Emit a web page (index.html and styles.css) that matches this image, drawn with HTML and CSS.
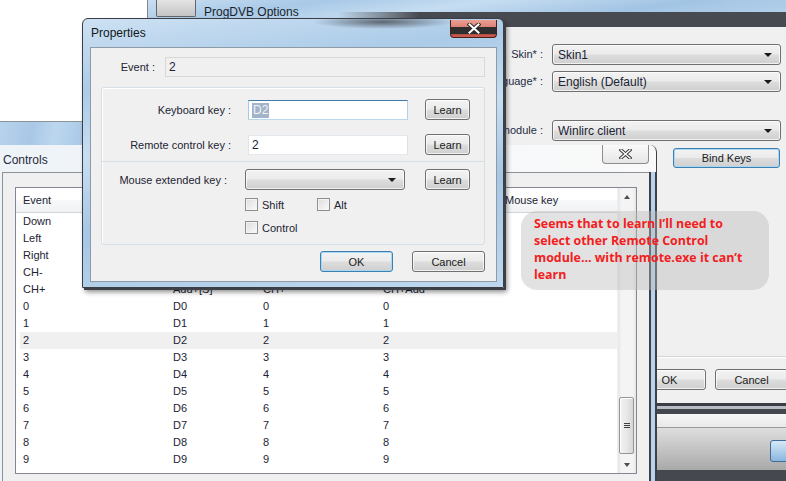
FILE: index.html
```html
<!DOCTYPE html>
<html>
<head>
<meta charset="utf-8">
<link rel="stylesheet" href="styles.css">
</head>
<body>
<div class="glass-strip"></div>

<section class="win pd">
  <header class="pd-title glass">
    <div class="pd-tab"></div>
    <span class="pd-title-text">ProgDVB Options</span>
    <div class="pd-dark"></div>
  </header>
  <div class="pd-body">
    <div class="pd-frame glass"></div>
    <div class="pd-client">
      <div class="pd-form">
        <span class="pd-lbl">Skin* :</span><div class="combo"><span>Skin1</span><i class="arrow"></i></div>
        <span class="pd-lbl">Language* :</span><div class="combo"><span>English (Default)</span><i class="arrow"></i></div>
        <span class="pd-lbl far">Remote control module :</span><div class="combo far"><span>Winlirc client</span><i class="arrow"></i></div>
      </div>
      <button class="btn def bind">Bind Keys</button>
      <div class="pd-sep"></div>
      <div class="pd-btns"><button class="btn">OK</button><button class="btn">Cancel</button></div>
    </div>
  </div>
  <div class="pd-bottom">
    <div class="pb-dark"></div>
    <div class="pb-mid"></div>
    <div class="pb-dark2"></div>
    <div class="pb-light"></div>
    <div class="pb-gray"><div class="pb-btn"></div></div>
    <div class="pb-dark3"></div>
  </div>
</section>

<section class="win ctl">
  <header class="ctl-title">
    <span>Controls</span>
    <div class="close-in">
      <svg width="13" height="10" viewBox="0 0 13 10"><path d="M2 1 L11 9 M11 1 L2 9" stroke="#3c3c3c" stroke-width="3.4" stroke-linecap="square"/><path d="M2 1 L11 9 M11 1 L2 9" stroke="#ffffff" stroke-width="1.4" stroke-linecap="square"/></svg>
    </div>
  </header>
  <div class="ctl-body">
    <div class="ctl-frame-l"></div>
    <div class="ctl-client">
      <div class="lv">
        <div class="lv-main">
          <div class="lv-head">
            <span class="c1">Event</span><span class="c2"></span><span class="c3"></span><span class="c4"></span><span class="c5">Mouse key</span>
          </div>
          <div class="lv-row"><span class="c1">Down</span></div>
          <div class="lv-row"><span class="c1">Left</span></div>
          <div class="lv-row"><span class="c1">Right</span></div>
          <div class="lv-row"><span class="c1">CH-</span></div>
          <div class="lv-row"><span class="c1">CH+</span><span class="c2">Add+[S]</span><span class="c3">CH+</span><span class="c4">CH+Add</span></div>
          <div class="lv-row"><span class="c1">0</span><span class="c2">D0</span><span class="c3">0</span><span class="c4">0</span></div>
          <div class="lv-row"><span class="c1">1</span><span class="c2">D1</span><span class="c3">1</span><span class="c4">1</span></div>
          <div class="lv-row sel"><span class="c1">2</span><span class="c2">D2</span><span class="c3">2</span><span class="c4">2</span></div>
          <div class="lv-row"><span class="c1">3</span><span class="c2">D3</span><span class="c3">3</span><span class="c4">3</span></div>
          <div class="lv-row"><span class="c1">4</span><span class="c2">D4</span><span class="c3">4</span><span class="c4">4</span></div>
          <div class="lv-row"><span class="c1">5</span><span class="c2">D5</span><span class="c3">5</span><span class="c4">5</span></div>
          <div class="lv-row"><span class="c1">6</span><span class="c2">D6</span><span class="c3">6</span><span class="c4">6</span></div>
          <div class="lv-row"><span class="c1">7</span><span class="c2">D7</span><span class="c3">7</span><span class="c4">7</span></div>
          <div class="lv-row"><span class="c1">8</span><span class="c2">D8</span><span class="c3">8</span><span class="c4">8</span></div>
          <div class="lv-row"><span class="c1">9</span><span class="c2">D9</span><span class="c3">9</span><span class="c4">9</span></div>
        </div>
        <div class="sb">
          <div class="sb-up"><i class="tri-up"></i></div>
          <div class="sb-thumb"><span></span><span></span><span></span></div>
          <div class="sb-down"><i class="tri-down"></i></div>
        </div>
      </div>
    </div>
    <div class="ctl-frame-r"></div>
  </div>
</section>

<section class="win props">
  <header class="pr-title">
    <span>Properties</span>
    <div class="close-red">
      <svg width="14" height="11" viewBox="0 0 14 11"><path d="M2.5 1.5 L11.5 9.5 M11.5 1.5 L2.5 9.5" stroke="#2a2a2a" stroke-width="4" stroke-linecap="square"/><path d="M2.5 1.5 L11.5 9.5 M11.5 1.5 L2.5 9.5" stroke="#ffffff" stroke-width="2" stroke-linecap="square"/></svg>
    </div>
  </header>
  <div class="pr-body">
    <div class="pr-client">
      <div class="ev-row"><span class="ev-label">Event :</span><div class="field disabled">2</div></div>
      <div class="grp">
        <div class="s1">
          <span class="lbl">Keyboard key :</span><div class="field focus"><span class="hl">D2</span></div><button class="btn learn">Learn</button>
          <span class="lbl">Remote control key :</span><div class="field">2</div><button class="btn learn">Learn</button>
        </div>
        <div class="s2">
          <span class="lbl">Mouse extended key :</span><div class="combo small"><span></span><i class="arrow"></i></div><button class="btn learn">Learn</button>
          <div class="checks">
            <label class="chk"><i class="box"></i>Shift</label>
            <label class="chk"><i class="box"></i>Alt</label>
            <label class="chk"><i class="box"></i>Control</label>
          </div>
        </div>
      </div>
      <div class="pr-btns"><button class="btn def">OK</button><button class="btn">Cancel</button></div>
    </div>
  </div>
</section>

<div class="bubble">Seems that to learn I’ll need to select other Remote Control module... with remote.exe it can’t learn</div>
</body>
</html>
```

FILE: styles.css
```css
* { box-sizing: border-box; margin: 0; padding: 0; }
html, body { width: 786px; height: 481px; overflow: hidden; }
body {
  position: relative;
  background: #ffffff;
  font-family: "Liberation Sans", Arial, sans-serif;
  font-size: 11px;
  color: #1c2433;
}

.glass {
  background: linear-gradient(172deg, #c9def2 0%, #a8c9e7 22%, #c6ddf1 42%, #a2c4e4 66%, #bdd7ee 100%);
}

.win { position: absolute; }

/* strip of window frame behind, left */
.glass-strip {
  position: absolute;
  left: 0; top: 121px;
  width: 90px; height: 26px;
  border-top: 1px solid #8e9398;
  background: linear-gradient(100deg, #b8d3ec 0%, #a9c8e6 35%, #bcd6ee 60%, #a5c6e5 100%);
}

/* ---------- ProgDVB Options ---------- */
.pd { left: 147px; top: 0; width: 639px; height: 481px; display: flex; flex-direction: column; z-index: 1; }
.pd-title { position: relative; height: 27px; flex: none; border-left: 1px solid #7d8a96; }
.pd-tab {
  position: absolute; left: 8px; top: 0; width: 40px; height: 17px;
  background: linear-gradient(#e4e4e4, #c4c4c4);
  border: 1px solid #62666b; border-top: none; border-radius: 0 0 2px 2px;
}
.pd-title-text { position: absolute; left: 56px; top: 5px; font-size: 12px; color: #1a1f2b; line-height: 14px; }
.pd-dark {
  position: absolute; left: 190px; right: 0; top: 12px; height: 15px;
  background: linear-gradient(90deg, rgba(70,74,81,0) 0%, #474a51 18%, #474a51 100%);
}
.pd-body { display: flex; height: 376px; flex: none; }
.pd-frame { width: 8px; flex: none; border-left: 1px solid #7d8a96; }
.pd-client {
  flex: 1; min-width: 0; background: #f0f0f0;
  display: flex; flex-direction: column;
  border-left: 1px solid #c9c9c9;
}
.pd-form {
  margin-top: 17px;
  display: grid;
  grid-template-columns: 387px 229px;
  grid-template-rows: 21px 21px 43px;
  column-gap: 9px;
  row-gap: 6px;
}
.pd-lbl { text-align: right; line-height: 21px; color: #1e2c44; font-size: 11px; white-space: nowrap; }
.pd-form .combo { height: 21px; }
.pd-form .far { align-self: end; }
.bind { margin: 7px 0 0 517px; width: 107px; height: 20px; flex: none; }
.pd-sep { margin-top: 188px; height: 2px; flex: none; border-top: 1px solid #d5d5d5; border-bottom: 1px solid #ffffff; }
.pd-btns { margin: 11px 0 0 477px; display: flex; gap: 9px; }
.pd-btns .btn { width: 73px; height: 21px; flex: none; }

.pd-bottom { flex: 1; display: flex; flex-direction: column; }
.pb-dark { height: 3px; background: #3a3d43; }
.pb-mid { height: 3px; background: #b9bdc3; }
.pb-dark2 { height: 5px; background: #44474d; }
.pb-light { height: 14px; background: linear-gradient(#f7f7f7, #e9e9e9); border-bottom: 1px solid #9a9a9a; }
.pb-gray {
  height: 42px; position: relative;
  background: linear-gradient(#dedede, #a9a9a9);
  border-radius: 8px 0 0 0;
}
.pb-btn {
  position: absolute; left: 623px; top: 12px; width: 30px; height: 22px;
  border: 1px solid #3f6d98; border-radius: 3px;
  background: linear-gradient(#d7e8f7, #8ab7df);
}
.pb-dark3 { flex: 1; background: #45484f; }

/* ---------- common controls ---------- */
.btn {
  font-family: "Liberation Sans", Arial, sans-serif;
  font-size: 11px;
  color: #1a1a1a;
  border: 1px solid #707070;
  border-radius: 3px;
  background: linear-gradient(#f3f3f3 0%, #ebebeb 48%, #dddddd 52%, #cfcfcf 100%);
  box-shadow: inset 0 0 0 1px rgba(255,255,255,0.7);
  display: flex; align-items: center; justify-content: center;
}
.btn.def {
  border-color: #3c7fb1;
  box-shadow: inset 0 0 0 1px #a9d7f4;
}
.combo {
  position: relative;
  border: 1px solid #707070;
  border-radius: 3px;
  background: linear-gradient(#f2f2f2 0%, #ebebeb 48%, #dddddd 52%, #cfcfcf 100%);
  box-shadow: inset 0 0 0 1px rgba(255,255,255,0.7);
  display: flex; align-items: center;
  padding-left: 5px;
  color: #1a2334;
  font-size: 12px;
}
.arrow {
  position: absolute; right: 8px; top: 50%; margin-top: -2px;
  width: 0; height: 0;
  border-left: 4px solid transparent; border-right: 4px solid transparent;
  border-top: 4px solid #1b1b1b;
}
.field {
  height: 20px;
  background: #ffffff;
  border: 1px solid #abadb3;
  border-top-color: #e3e9ef;
  border-left-color: #e2e3ea;
  border-right-color: #dbdfe6;
  border-bottom-color: #e3e9ef;
  padding-left: 3px;
  line-height: 18px;
  font-size: 12px;
  color: #1a2334;
}
.field.focus { border-color: #3d7bad #b5cfe7 #b7d9ed #a4c9e3; border-top-color: #3d7bad; }
.field.disabled { background: #f0f0f0; border-color: #d8d8d8; }
.hl { background: #a3b3c9; color: #eef2f7; padding: 0 1px; display: inline-block; line-height: 15px; margin-top: 1px; }

/* ---------- Controls ---------- */
.ctl { left: -5px; top: 145px; width: 662px; height: 345px; display: flex; flex-direction: column; z-index: 2; }
.ctl-title {
  position: relative; height: 27px; flex: none;
  background: linear-gradient(90deg, #eef3f8 0%, #f6f8fa 60%, #f9f9f9 100%);
  border-top-right-radius: 7px;
  border-right: 1px solid #3c3f45;
  padding-left: 8px;
  font-size: 12px; line-height: 30px; color: #1f2a3b;
}
.close-in {
  position: absolute; right: 7px; top: 0; width: 47px; height: 19px;
  border: 1px solid #8d8d8d; border-top: none;
  border-radius: 0 0 4px 4px;
  background: linear-gradient(#fafafa, #e6e6e6);
  display: flex; align-items: center; justify-content: center;
}
.ctl-body { flex: 1; display: flex; }
.ctl-frame-l { width: 8px; flex: none; background: #eef3f8; border-right: 1px solid #8d9298; }
.ctl-client {
  width: 646px; flex: none; background: #f0f0f0;
  border-top: 1px solid #8d9298;
  padding: 14px 12px 0 12px;
}
.ctl-frame-r {
  width: 8px; flex: none;
  border-left: 2px solid #3d4046;
  border-right: 2px solid #3d4046;
  background: #b7d3ec;
}
.lv {
  width: 622px; height: 287px;
  border: 1px solid #828790;
  background: #ffffff;
  display: flex;
}
.lv-main { flex: 1; min-width: 0; overflow: hidden; }
.lv-head {
  display: flex; height: 25px;
  background: linear-gradient(#ffffff 0%, #ffffff 50%, #f7f8fa 51%, #f1f2f4 100%);
  border-bottom: 1px solid #d5d5d5;
  line-height: 24px;
  font-size: 11px; color: #1c2433;
}
.lv-row { display: flex; height: 17px; line-height: 17px; margin-left: 4px; }
.lv-row.sel { background: #f0f0f0; }
.c1, .c2, .c3, .c4 { flex: none; white-space: nowrap; overflow: hidden; }
.lv-head .c1 { width: 154px; padding-left: 7px; }
.lv-head .c2 { width: 90px; }
.lv-head .c3 { width: 120px; }
.lv-head .c4 { width: 125px; }
.lv-row .c1 { width: 153px; padding-left: 3px; }
.lv-row .c2 { width: 90px; }
.lv-row .c3 { width: 120px; }
.lv-row .c4 { width: 122px; }
.c5 { flex: 1; white-space: nowrap; }

.sb {
  width: 19px; flex: none; position: relative;
  background: linear-gradient(90deg, #e6e6e6 0%, #f4f4f4 20%, #f4f4f4 80%, #e6e6e6 100%);
  border-left: 1px solid #efefef;
}
.sb-up, .sb-down { position: absolute; left: 0; right: 0; height: 17px; display: flex; align-items: center; justify-content: center; }
.sb-up { top: 0; }
.sb-down { bottom: 0; }
.tri-up { width: 0; height: 0; border-left: 3.5px solid transparent; border-right: 3.5px solid transparent; border-bottom: 4px solid #4d4d4d; }
.tri-down { width: 0; height: 0; border-left: 3.5px solid transparent; border-right: 3.5px solid transparent; border-top: 4px solid #4d4d4d; }
.sb-thumb {
  position: absolute; left: 1px; width: 15px; top: 209px; height: 57px;
  border: 1px solid #959595; border-radius: 2px;
  background: linear-gradient(90deg, #f3f3f3 0%, #e8e8e8 50%, #d6d6d6 100%);
  box-shadow: inset 1px 1px 0 #ffffff;
  display: flex; flex-direction: column; align-items: center; justify-content: center; gap: 1px;
}
.sb-thumb span { width: 6px; height: 1px; background: #3f3f3f; }

/* ---------- Properties ---------- */
.props {
  left: 82px; top: 18px; width: 422px; height: 270px;
  z-index: 3;
  border: 1px solid #3b3e44;
  border-radius: 6px 6px 0 0;
  background:
    radial-gradient(ellipse 70px 7px at 300px 3px, rgba(62,66,72,0.75), rgba(62,66,72,0) 100%),
    linear-gradient(172deg, #cde1f3 0%, #abcbe8 22%, #c7def1 42%, #a5c6e5 66%, #bfd8ee 100%);
  box-shadow: 2px 2px 0 #3d4046, 3px 4px 5px rgba(0,0,0,0.45);
  display: flex; flex-direction: column;
}
.pr-title {
  position: relative; height: 28px; flex: none;
  padding-left: 8px; font-size: 12px; line-height: 28px; color: #111820;
}
.close-red {
  position: absolute; right: 6px; top: 1px; width: 47px; height: 18px;
  border: 1px solid #4a1f1a; border-top: none;
  border-radius: 0 0 4px 4px;
  background: linear-gradient(#ea9e93 0%, #e0857a 38%, #d46a5e 40%, #2e2e2e 42%, #2e2e2e 82%, #c9574c 86%, #c9574c 100%);
  display: flex; align-items: center; justify-content: center;
}
.pr-body { flex: 1; padding: 0 6px 5px 7px; }
.pr-client {
  height: 100%;
  background: #f0f0f0;
  border: 1px solid #8e9aa6;
  display: flex; flex-direction: column;
}
.ev-row { display: flex; margin-top: 9px; align-items: center; }
.ev-label { width: 64px; text-align: right; font-size: 11px; }
.ev-row .field { margin-left: 10px; width: 320px; }
.grp {
  margin: 10px 0 0 10px; width: 384px;
  border: 1px solid #d5dfe5; border-radius: 3px;
  box-shadow: 1px 1px 0 #ffffff inset;
}
.s1 {
  display: grid;
  grid-template-columns: 129px 160px 45px;
  column-gap: 17px;
  row-gap: 14px;
  grid-auto-rows: 21px;
  padding: 11px 0 6px 0;
  border-bottom: 1px solid #d5dfe5;
  align-items: center;
}
.lbl { text-align: right; font-size: 11px; white-space: nowrap; }
.s1 .field { height: 20px; }
.learn { height: 21px; width: 45px; }
.s2 {
  display: grid;
  grid-template-columns: 125px 160px 45px;
  column-gap: 18px;
  grid-auto-rows: auto;
  padding: 7px 0 10px 0;
  align-items: center;
}
.s2 .btn.learn { margin-left: 2px; }
.combo.small { height: 21px; }
.checks {
  grid-column: 2 / 4;
  display: grid;
  grid-template-columns: 72px 80px;
  row-gap: 10px;
  margin-top: 8px;
}
.chk { display: flex; align-items: center; gap: 4px; height: 13px; font-size: 11px; }
.box {
  width: 13px; height: 13px; flex: none;
  border: 1px solid #8e8f8f;
  background: linear-gradient(135deg, #dcdcdc, #fbfbfb);
  box-shadow: inset 0 0 0 1px #f4f4f4;
}
.pr-btns { display: flex; justify-content: flex-end; gap: 19px; margin-top: 6px; padding-right: 11px; }
.pr-btns .btn { width: 73px; height: 21px; }

/* ---------- annotation bubble ---------- */
.bubble {
  position: absolute; left: 521px; top: 211px; width: 248px; height: 79px;
  z-index: 4;
  background: rgba(185,185,185,0.42);
  border-radius: 16px;
  padding: 4px 10px 0 13px;
  font-family: "Open Sans", "Liberation Sans", sans-serif;
  font-weight: 700;
  font-size: 12.4px;
  line-height: 17px;
  color: #f2201d;
}
```
